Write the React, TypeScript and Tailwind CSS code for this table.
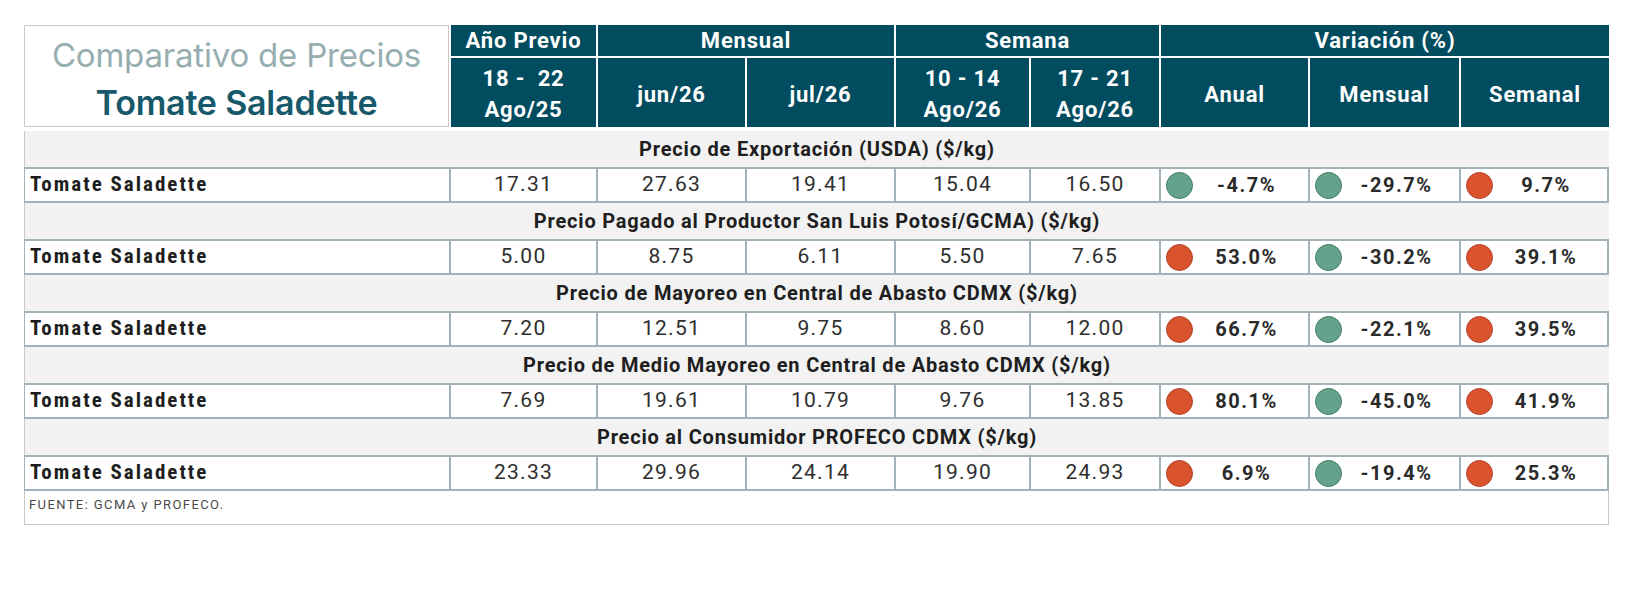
import React from 'react'

type Trend = 'up' | 'down'

interface Section {
  title: string
  values: string[]
  variations: [string, Trend][]
}

const sections: Section[] = [
  {
    title: 'Precio de Exportación (USDA) ($/kg)',
    values: ['17.31', '27.63', '19.41', '15.04', '16.50'],
    variations: [['-4.7%', 'down'], ['-29.7%', 'down'], ['9.7%', 'up']],
  },
  {
    title: 'Precio Pagado al Productor San Luis Potosí/GCMA) ($/kg)',
    values: ['5.00', '8.75', '6.11', '5.50', '7.65'],
    variations: [['53.0%', 'up'], ['-30.2%', 'down'], ['39.1%', 'up']],
  },
  {
    title: 'Precio de Mayoreo en Central de Abasto CDMX ($/kg)',
    values: ['7.20', '12.51', '9.75', '8.60', '12.00'],
    variations: [['66.7%', 'up'], ['-22.1%', 'down'], ['39.5%', 'up']],
  },
  {
    title: 'Precio de Medio Mayoreo en Central de Abasto CDMX ($/kg)',
    values: ['7.69', '19.61', '10.79', '9.76', '13.85'],
    variations: [['80.1%', 'up'], ['-45.0%', 'down'], ['41.9%', 'up']],
  },
  {
    title: 'Precio al Consumidor PROFECO CDMX ($/kg)',
    values: ['23.33', '29.96', '24.14', '19.90', '24.93'],
    variations: [['6.9%', 'up'], ['-19.4%', 'down'], ['25.3%', 'up']],
  },
]

const condensed = "font-['Roboto_Condensed','Liberation_Sans_Narrow',sans-serif]"
const roboto = "font-['Roboto','Liberation_Sans',sans-serif]"

const headerCell =
  'bg-[#014c5f] text-white font-bold text-[22px] tracking-[0.8px] flex items-center justify-center border-l-2 border-white'

function Dot({ trend }: { trend: Trend }) {
  return (
    <span
      className={`block shrink-0 w-[27px] h-[27px] rounded-full border ${
        trend === 'up' ? 'bg-[#d9532f] border-[#b5432a]' : 'bg-[#64a28b] border-[#3f7d67]'
      }`}
    />
  )
}

export default function App() {
  return (
    <div className="bg-white w-[1636px] h-[616px] pl-[24px] pt-[25px]">
      <div className="w-[1585px]">
        {/* Header */}
        <div className={`grid grid-cols-[425px_147px_149px_149px_135px_130px_149px_151px_150px] grid-rows-[33px_69px] ${roboto}`}>
          <div className="row-span-2 border border-[#c8c8c8] flex flex-col items-center justify-center pt-[6px] font-['Inter',sans-serif] leading-none">
            <div className="text-[33px] text-[#97aeb1] tracking-[-0.2px]">Comparativo de Precios</div>
            <div className="mt-[14px] text-[34px] font-semibold text-[#17596a] tracking-[-0.2px]">Tomate Saladette</div>
          </div>
          <div className={`${headerCell} border-b-2`}>Año Previo</div>
          <div className={`${headerCell} border-b-2 col-span-2`}>Mensual</div>
          <div className={`${headerCell} border-b-2 col-span-2`}>Semana</div>
          <div className={`${headerCell} border-b-2 col-span-3`}>Variación (%)</div>
          {[
            ['18 -  22', 'Ago/25'],
            ['jun/26'],
            ['jul/26'],
            ['10 - 14', 'Ago/26'],
            ['17 - 21', 'Ago/26'],
            ['Anual'],
            ['Mensual'],
            ['Semanal'],
          ].map((lines, i) => (
            <div key={i} className={`${headerCell} flex-col leading-[31px] pt-[3px]`}>
              {lines.map((l) => (
                <span key={l} className="whitespace-pre">{l}</span>
              ))}
            </div>
          ))}
        </div>

        {/* Body */}
        <div className="mt-[4px] grid grid-cols-[425px_147px_149px_149px_135px_130px_149px_151px_150px] auto-rows-[36px]">
          {sections.map((s) => (
            <React.Fragment key={s.title}>
              <div className={`col-span-9 bg-[#f2f2f2] border-l border-[#c8c8c8] flex items-center justify-center font-bold text-[20px] text-[#1e1e1e] tracking-[0.8px] ${roboto}`}>
                {s.title}
              </div>
              <div className={`bg-white border-y-2 border-l border-[#a2b2b8] flex items-center pl-[5px] font-bold text-[21px] text-[#1e1e1e] tracking-[2px] ${condensed}`}>
                Tomate Saladette
              </div>
              {s.values.map((v, i) => (
                <div
                  key={i}
                  className={`bg-white border-y-2 border-l-2 border-[#a2b2b8] flex items-center justify-center text-[21px] tracking-[1.3px] text-[#2e2e2e] ${roboto}`}
                >
                  {v}
                </div>
              ))}
              {s.variations.map(([v, t], i) => (
                <div
                  key={i}
                  className={`bg-white border-y-2 border-l-2 border-[#a2b2b8] flex items-center pl-[5px] pr-[8px] ${roboto} ${
                    i === 2 ? 'border-r-2' : ''
                  }`}
                >
                  <Dot trend={t} />
                  <span className="flex-1 text-center font-bold text-[20px] tracking-[1.5px] text-[#2a2a2a]">{v}</span>
                </div>
              ))}
            </React.Fragment>
          ))}
          <div className={`col-span-9 h-[34px] border border-t-0 border-[#c8c8c8] pl-[4px] pt-[7px] text-[13px] leading-none text-[#4a4a4a] tracking-[1.4px] ${roboto}`}>
            FUENTE: GCMA y PROFECO.
          </div>
        </div>
      </div>
    </div>
  )
}
